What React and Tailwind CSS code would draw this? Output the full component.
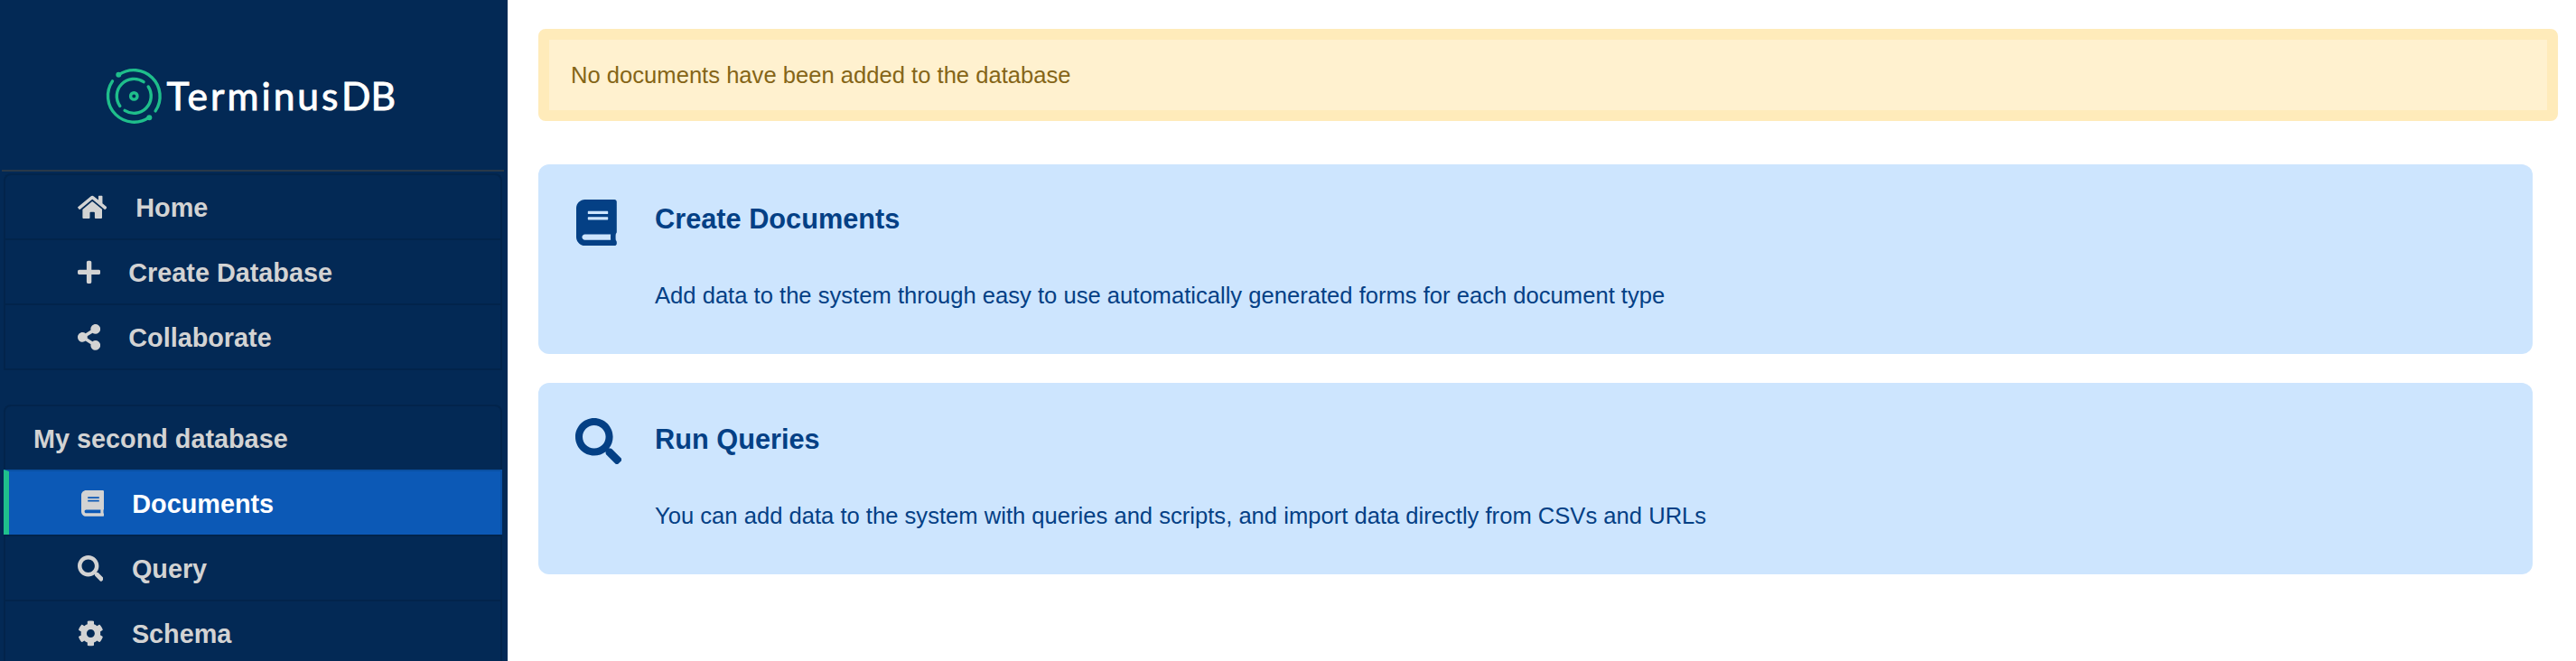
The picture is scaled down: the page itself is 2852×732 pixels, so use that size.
import { FaHome, FaPlus, FaShareAlt, FaBook, FaSearch, FaCog } from "react-icons/fa";

function Logo() {
  return (
    <svg className="block h-[90px] w-[360px]" viewBox="100 60 360 90" role="img">
      <g fill="none" stroke="#1fbe8b" strokeWidth="3.4" strokeLinecap="round">
        <path d="M131.4 82.9A29 29 0 0 1 172.1 122.9" />
        <path d="M165.2 129.9A29 29 0 0 1 124.5 89.9" />
        <path d="M159 90.7A19 19 0 0 0 132.8 117.4" />
        <path d="M164.2 96A19 19 0 0 1 138.1 122.4" />
        <circle cx="148.3" cy="106.4" r="3.7" />
      </g>
      <circle cx="131.3" cy="82.8" r="3" fill="#1fbe8b" />
      <circle cx="165.3" cy="130.2" r="3" fill="#1fbe8b" />
      <g fill="#ffffff" stroke="#ffffff" strokeWidth="0.9" fontFamily="Lato, sans-serif" fontSize="42.5" fontWeight="400">
        <text x="184.5" y="121.7" textLength="190" lengthAdjust="spacing">Terminus</text>
        <text x="378" y="121.7" textLength="60" lengthAdjust="spacingAndGlyphs">DB</text>
      </g>
    </svg>
  );
}

function NavItem({ icon: Icon, size, label, active, first }) {
  const shape = first ? "rounded-t-[8px]" : "";
  const look = active
    ? "border-l-[6px] border-t-[#0a50a3] border-r-[#0a50a3] border-l-[#1fc18c] bg-[#0c59b6] text-white"
    : "border-l-2 border-[#02244b]";
  return (
    <li className={`flex h-[72px] items-start border-t-2 border-r-2 pl-[79.5px] ${shape} ${look}`}>
      <Icon className={`mt-[21px] h-[28.8px] shrink-0 text-[#d3d3d3] ${size}`} />
      <span className="mt-[18px] leading-[36px]">{label}</span>
    </li>
  );
}

function Card({ icon: Icon, size, title, text, className, titleClass }) {
  return (
    <section className={`flex rounded-[12px] bg-[#cde5fe] pl-[41px] text-[#044085] ${className}`}>
      <div className="w-[88px] shrink-0 pt-[39px]">
        <Icon className={`h-[51.2px] ${size}`} />
      </div>
      <div>
        <h2 className={`text-[30.72px] leading-[38px] font-bold ${titleClass}`}>{title}</h2>
        <p className="mt-[46px] leading-[38px]">{text}</p>
      </div>
    </section>
  );
}

export default function App() {
  return (
    <div className="flex h-[732px] w-[2852px] overflow-hidden bg-white font-['Liberation_Sans',Arial,sans-serif] text-[25.6px]">
      <aside className="h-full w-[562px] shrink-0 overflow-hidden bg-[#032955] text-[28.8px] font-bold text-[#d3d3d3]">
        <div className="mr-1 ml-0.5 flex h-[190px] border-b-2 border-[#293848] pt-[60px] pl-[98px]">
          <Logo />
        </div>
        <ul className="mt-0.5 mr-1.5 ml-1 border-b-2 border-[#02244b]">
          <NavItem first icon={FaHome} size="mr-[32.4px] w-[32.4px]" label="Home" />
          <NavItem icon={FaPlus} size="mr-[31.6px] w-[25.2px]" label="Create Database" />
          <NavItem icon={FaShareAlt} size="mr-[31.6px] w-[25.2px]" label="Collaborate" />
        </ul>
        <ul className="mt-[38px] mr-1.5 ml-1">
          <li className="flex h-[72px] rounded-t-[8px] border-2 border-b-0 border-[#02244b] pt-[18px] pl-[31px] leading-[36px]">
            My second database
          </li>
          <NavItem active icon={FaBook} size="mr-[31.6px] w-[25.2px]" label="Documents" />
          <NavItem icon={FaSearch} size="mr-[31.6px] w-[28.8px]" label="Query" />
          <NavItem icon={FaCog} size="mr-[31.6px] w-[28.8px]" label="Schema" />
        </ul>
      </aside>
      <main className="flex-1 pt-[32px] pl-[34px]">
        <div className="h-[102px] w-[2236px] rounded-[8px] border-[12px] border-[#ffebba] bg-[#fff1cf] pt-[20px] pl-[24px] leading-[38px] text-[#856517]">
          No documents have been added to the database
        </div>
        <Card
          className="mt-[48px] h-[210px] w-[2208px]"
          titleClass="mt-[42px]"
          icon={FaBook}
          size="ml-px w-[44.8px]"
          title="Create Documents"
          text="Add data to the system through easy to use automatically generated forms for each document type"
        />
        <Card
          className="mt-[32px] h-[212px] w-[2208px]"
          titleClass="mt-[44px]"
          icon={FaSearch}
          size="w-[51.2px]"
          title="Run Queries"
          text="You can add data to the system with queries and scripts, and import data directly from CSVs and URLs"
        />
      </main>
    </div>
  );
}
